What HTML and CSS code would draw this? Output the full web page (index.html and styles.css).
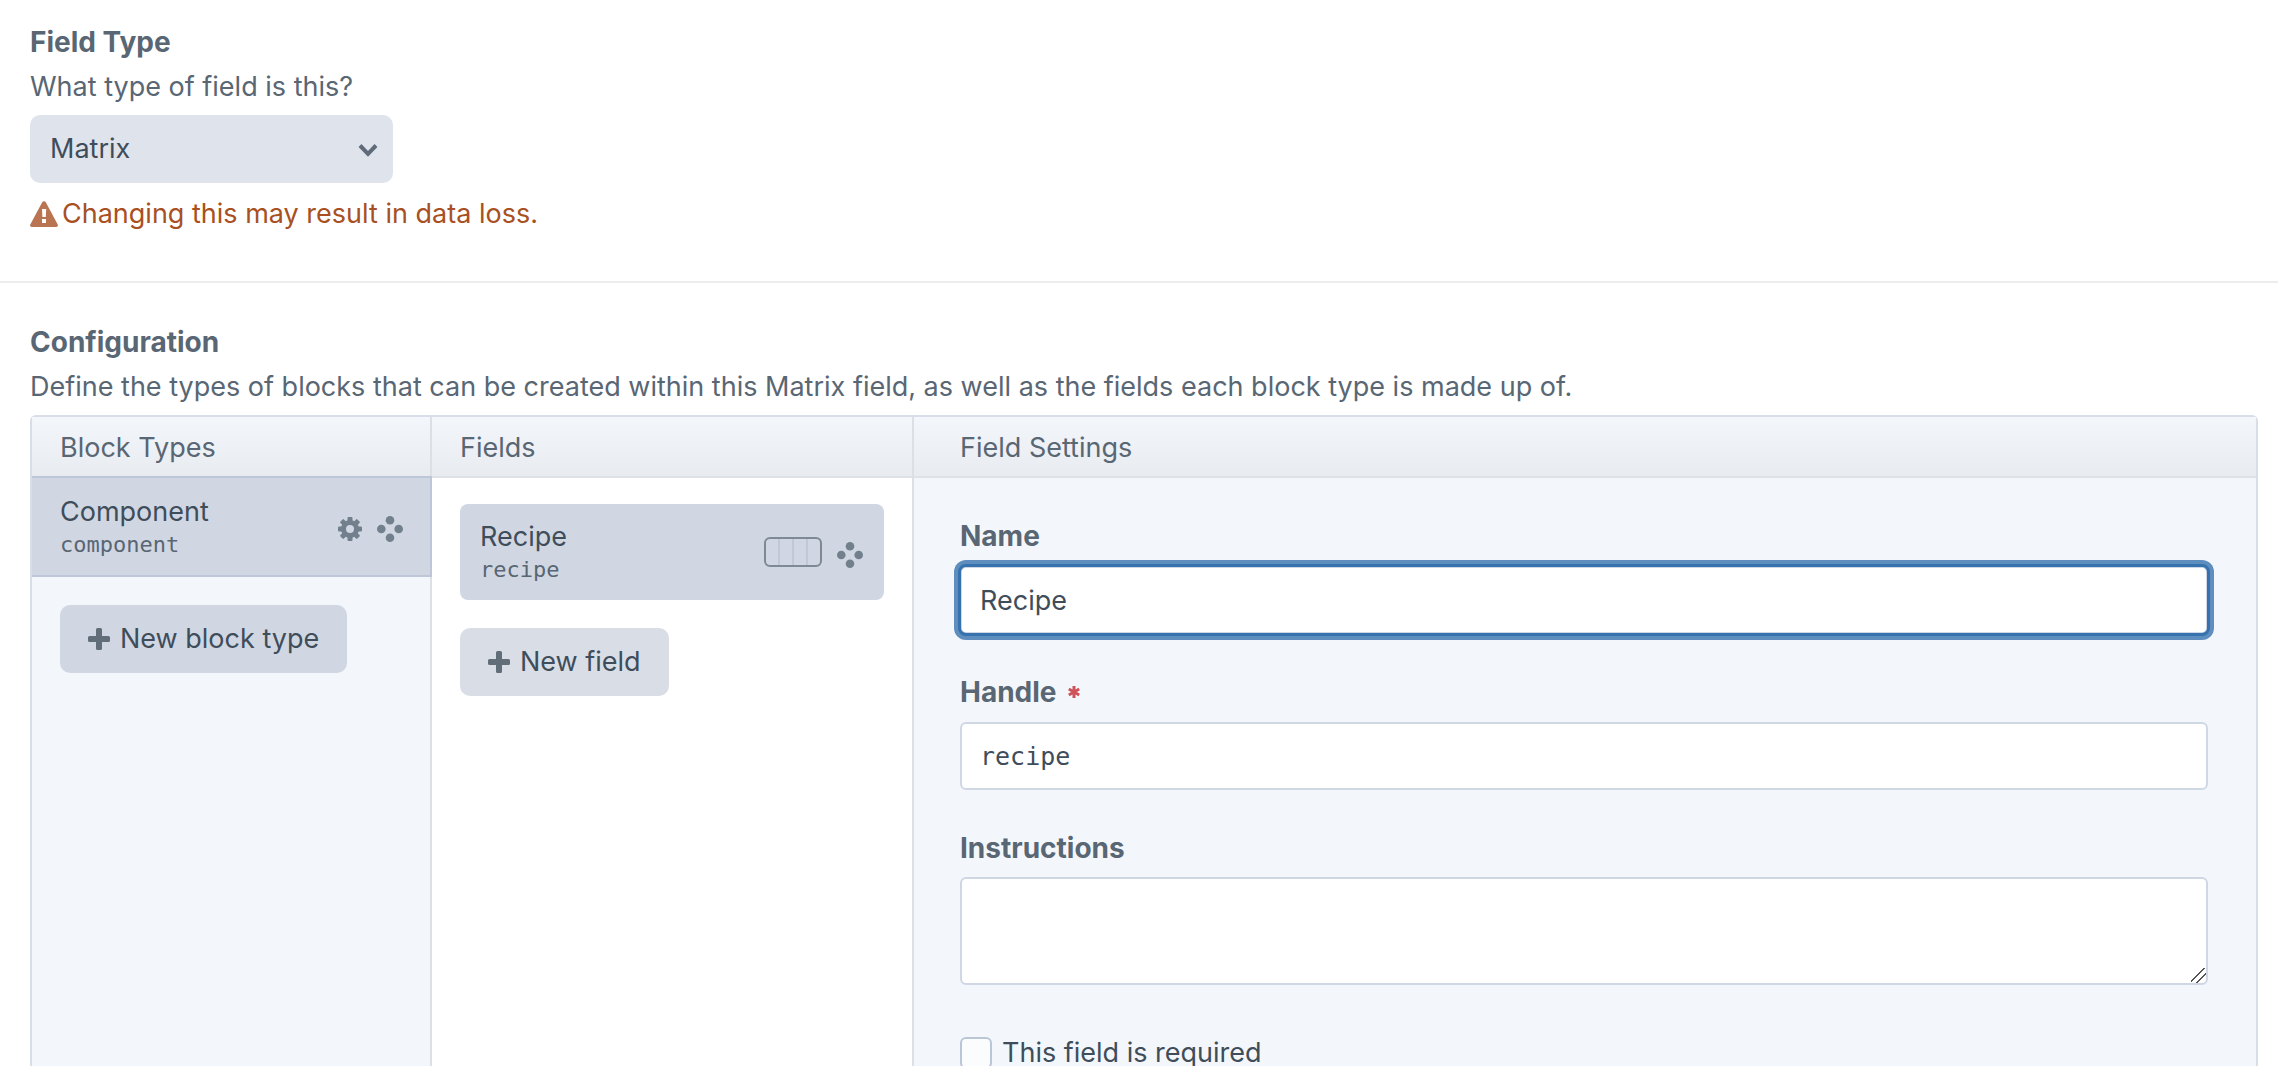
FILE: index.html
```html
<!DOCTYPE html>
<html lang="en">
<head>
<meta charset="utf-8">
<title>Field Settings</title>
<meta name="viewport" content="width=device-width, initial-scale=1">
<link rel="stylesheet" href="styles.css">
</head>
<body>
<svg class="sprite" aria-hidden="true">
  <symbol id="icon-move" viewBox="0 0 26 26">
    <circle cx="13" cy="4.3" r="4.3"/><circle cx="4.3" cy="13" r="4.3"/><circle cx="21.7" cy="13" r="4.3"/><circle cx="13" cy="21.7" r="4.3"/>
  </symbol>
  <symbol id="icon-plus" viewBox="0 0 22 22">
    <path d="M9.5 0h3a1.5 1.5 0 0 1 1.500 1.500V8h6.500a1.500 1.500 0 0 1 1.500 1.500v3a1.500 1.500 0 0 1-1.500 1.500H14v6.500a1.500 1.500 0 0 1-1.500 1.500h-3A1.500 1.500 0 0 1 8 20.500V14H1.500A1.500 1.500 0 0 1 0 12.500v-3A1.500 1.500 0 0 1 1.500 8H8V1.500A1.500 1.500 0 0 1 9.500 0z"/>
  </symbol>
</svg>
<main class="page">
  <section class="field">
    <label class="heading" for="type">Field Type</label>
    <p class="instructions">What type of field is this?</p>
    <div class="select">
      <select id="type"><option>Matrix</option></select>
      <svg class="chevron" viewBox="0 0 20 14" aria-hidden="true"><path d="M2 2.500 10 10.800 18 2.500"/></svg>
    </div>
    <p class="warning">
      <svg class="alert" viewBox="0 0 28 26" aria-hidden="true"><path fill-rule="evenodd" d="M12.200 1.200a2.100 2.100 0 0 1 3.600 0l11.900 22.300a1.700 1.700 0 0 1-1.500 2.500H1.800a1.700 1.700 0 0 1-1.500-2.500zM12 8l.4 8h3.400l.4-8zm0 10v4h4v-4z"/></svg>
      <span>Changing this may result in data loss.</span>
    </p>
  </section>
  <hr class="divider">
  <section class="field">
    <h2 class="heading">Configuration</h2>
    <p class="instructions">Define the types of blocks that can be created within this Matrix field, as well as the fields each block type is made up of.</p>
    <div class="matrix">
      <section class="column types">
        <h3 class="column-head">Block Types</h3>
        <div class="type-item">
          <div class="item-text"><span class="name">Component</span><code class="handle">component</code></div>
          <button class="icon-btn" type="button" aria-label="Settings">
            <svg class="gear" viewBox="-12 -12 24 24">
              <g id="teeth"><rect x="-2.500" y="-12" width="5" height="24" rx="1"/><rect x="-12" y="-2.500" width="24" height="5" rx="1"/></g>
              <use href="#teeth" transform="rotate(45)"/>
              <circle r="9"/><circle class="hole" r="4"/>
            </svg>
          </button>
          <button class="icon-btn" type="button" aria-label="Reorder"><svg class="move"><use href="#icon-move"/></svg></button>
        </div>
        <div class="column-body">
          <button class="btn btn-dark" type="button"><svg class="plus"><use href="#icon-plus"/></svg>New block type</button>
        </div>
      </section>
      <section class="column fields">
        <h3 class="column-head">Fields</h3>
        <div class="column-body">
          <div class="field-item">
            <div class="item-text"><span class="name">Recipe</span><code class="handle">recipe</code></div>
            <button class="width-slider" type="button" aria-label="Field width"><span></span><span></span><span></span><span></span></button>
            <button class="icon-btn" type="button" aria-label="Reorder"><svg class="move"><use href="#icon-move"/></svg></button>
          </div>
          <button class="btn" type="button"><svg class="plus"><use href="#icon-plus"/></svg>New field</button>
        </div>
      </section>
      <section class="column settings">
        <h3 class="column-head">Field Settings</h3>
        <form class="form">
          <div class="form-row">
            <label class="heading" for="name">Name</label>
            <input class="text focused" id="name" type="text" value="Recipe">
          </div>
          <div class="form-row">
            <label class="heading" for="handle">Handle
              <svg class="required" viewBox="-6 -6 12 12" aria-label="required"><path d="M0-6V6M-5.200-3 5.200 3M-5.200 3 5.200-3"/></svg>
            </label>
            <input class="text code" id="handle" type="text" value="recipe">
          </div>
          <div class="form-row">
            <label class="heading" for="instructions">Instructions</label>
            <textarea class="text area" id="instructions"></textarea>
          </div>
          <div class="check">
            <input id="required" type="checkbox"><label for="required">This field is required</label>
          </div>
        </form>
      </section>
    </div>
  </section>
</main>
</body>
</html>
```
FILE: styles.css
```css
* { box-sizing: border-box; }

body {
  margin: 0;
  background: #fff;
  color: #3f4d5a;
  font: 27px/40px Inter, "Liberation Sans", sans-serif;
}

h2, h3, p { margin: 0; font-size: inherit; font-weight: 400; }
button, input, select, textarea { margin: 0; font: inherit; color: inherit; }
svg { display: block; fill: currentColor; }
.sprite { position: absolute; width: 0; height: 0; }

.page { height: 100vh; overflow: hidden; padding-top: 22px; }
.field { padding: 0 20px 0 30px; }
.heading { display: flex; align-items: center; color: #596673; font-size: 28px; font-weight: 700; }
.instructions { margin: 5px 0 8px; color: #596673; }

.select { position: relative; width: 363px; }
.select select {
  display: block;
  width: 100%;
  height: 68px;
  padding: 0 60px 0 20px;
  border: 0;
  border-radius: 10px;
  background: #dfe3eb;
  appearance: none;
}
.chevron {
  position: absolute;
  top: 28px;
  right: 15px;
  width: 20px;
  height: 14px;
  fill: none;
  stroke: #5f6b79;
  stroke-width: 4;
  pointer-events: none;
}

.warning { display: flex; align-items: center; gap: 4px; margin-top: 11px; color: #a85022; }
.alert { width: 28px; height: 26px; color: #b97452; }
.divider { height: 2px; margin: 47px 0 39px; border: 0; background: #ebedef; }

.matrix {
  display: grid;
  grid-template-columns: 400px 482px 1fr;
  min-height: 800px;
  border: 2px solid #d9dde7;
  border-radius: 6px;
  background: #f3f7fc;
}
.column { border-right: 2px solid #dbe0e7; }
.settings { border-right: 0; }
.fields { background: #fff; }
.column-head {
  padding: 11px 28px 8px;
  border-bottom: 2px solid #dee2e8;
  background: linear-gradient(#f3f7fc, #e8ebf0);
  color: #596673;
}
.settings .column-head { padding-left: 46px; }
.column-body { padding: 26px 28px; }
.types .column-body { padding-top: 28px; }

.type-item, .field-item { display: flex; align-items: center; background: #d0d7e3; }
.type-item {
  height: 101px;
  margin: -2px -2px 0 0;
  padding: 4px 27px 0 28px;
  border: 2px solid #bec7d7;
  border-left: 0;
  gap: 15px;
}
.field-item {
  height: 96px;
  margin-bottom: 28px;
  padding: 0 21px 0 20px;
  border-radius: 8px;
  gap: 15px;
}
.item-text { display: flex; flex: 1; flex-direction: column; }
.type-item .item-text { padding-bottom: 4px; }
.name { line-height: 36px; }
.handle { color: #596673; font: 22px/30px "DejaVu Sans Mono", monospace; }

.icon-btn { padding: 0; border: 0; background: none; color: #71808c; }
.move { width: 26px; height: 26px; }
.field-item .icon-btn { padding-top: 6px; }
.gear { width: 24px; height: 24px; }
.hole { fill: #d0d7e3; }

.width-slider {
  display: flex;
  width: 58px;
  height: 30px;
  padding: 0;
  border: 2px solid #7d8995;
  border-radius: 6px;
  background: none;
}
.width-slider span { flex: 1; }
.width-slider span + span { border-left: 2px solid #bfc8d6; }

.btn {
  display: flex;
  align-items: center;
  gap: 10px;
  height: 68px;
  padding: 0 28px;
  border: 0;
  border-radius: 10px;
  background: #d9dde6;
}
.btn-dark { background: #d1d7e2; }
.plus { width: 22px; height: 22px; color: #616d79; }

.form { padding: 38px 48px 48px 46px; }
.form-row { margin-bottom: 38px; }
.required { width: 12px; height: 12px; margin-left: 11px; fill: none; stroke: #cf5459; stroke-width: 3; }
.text {
  display: block;
  width: 100%;
  height: 68px;
  margin-top: 10px;
  padding: 0 18px;
  border: 2px solid #d0d7e4;
  border-radius: 6px;
  background: #fff;
}
.focused { outline: 3px solid #3572ae; outline-offset: -1px; box-shadow: 0 0 0 6px #5d8ebd; }
.code { font: 25px/40px "DejaVu Sans Mono", monospace; }
.area { height: 108px; margin-top: 9px; resize: vertical; }
.area::-webkit-resizer {
  background: linear-gradient(135deg, transparent 9px, #555 9px, #555 10px, transparent 10px, transparent 14px, #555 14px, #555 15px, transparent 15px);
}

.check { display: flex; align-items: center; gap: 10px; margin-top: 48px; }
.check input {
  width: 32px;
  height: 32px;
  border: 2px solid #bac5d6;
  border-radius: 6px;
  background: #fbfcfe;
  appearance: none;
}
```
